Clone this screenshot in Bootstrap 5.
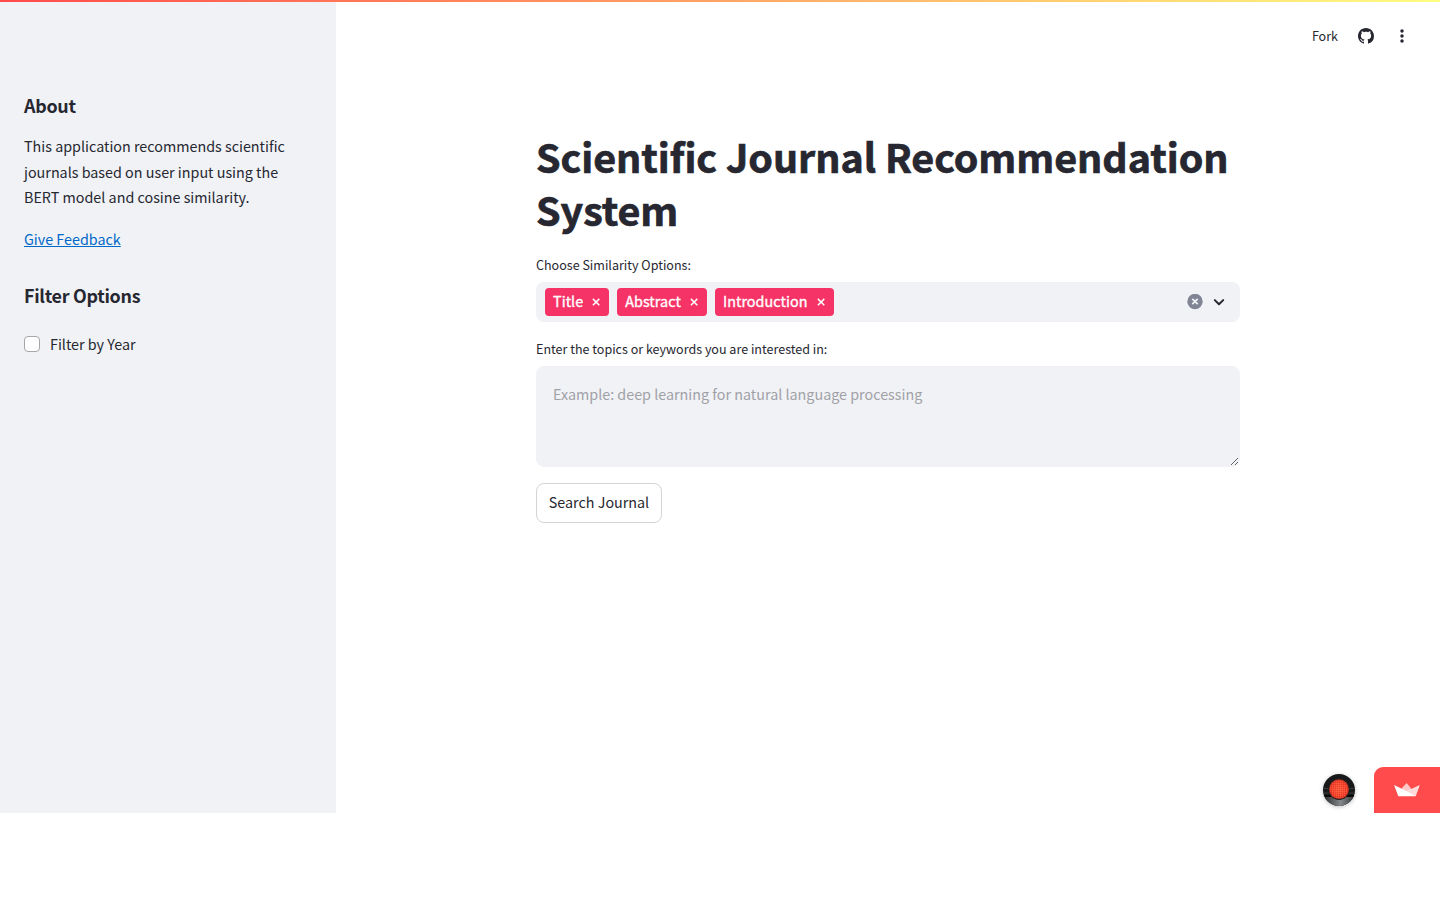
<!DOCTYPE html>
<html lang="en">
<head>
<meta charset="utf-8">
<meta name="viewport" content="width=device-width, initial-scale=1">
<title>Scientific Journal Recommendation System</title>
<link href="https://cdn.jsdelivr.net/npm/bootstrap@5.3.0/dist/css/bootstrap.min.css" rel="stylesheet">
<style>
  body { font-family: "Source Sans Pro", "Noto Sans CJK SC", sans-serif; font-size: 14.33px; line-height: 25.6px; color: #262730; background: #fff; }
  .app-shell { height: 813px; }
  .rainbow { top: 0; left: 0; height: 2px; background: linear-gradient(90deg, #ff4b4b, #fffd80); }
  .side-pane { width: 336px; background: #f0f2f6; padding: 93px 24px 0; }
  .side-pane h2 { font-size: 17.9px; line-height: 24px; font-weight: 700; letter-spacing: -.29px; margin: 0; }
  .side-pane p { margin: 16px 0 0; }
  .side-pane a { color: #0068c9; }
  .side-pane h2.filter-title { margin-top: 32px; }
  .filter-check { margin-top: 24px; gap: 10px; }
  .filter-check .form-check-input { width: 16px; height: 16px; margin: 0; border: 1px solid #a5a6ab; border-radius: 4px; }
  .topbar { height: 72px; padding-right: 30px; gap: 20px; font-size: 12.54px; line-height: 20px; }
  .content { width: 704px; margin: 58px 0 0 200px; }
  h1 { font-size: 39.4px; line-height: 52.8px; font-weight: 700; letter-spacing: -.03px; -webkit-text-stroke: .7px #262730; margin: 0 0 19px; white-space: nowrap; }
  .field-label { font-size: 12.54px; line-height: 20px; margin-bottom: 7px; }
  .multi { height: 40px; background: #f0f2f6; border-radius: 8px; padding: 0 13px 0 9px; margin-bottom: 17px; }
  .chip { height: 28px; background: #f63366; color: #fff; border-radius: 4px; padding: 0 8px; gap: 8px; font-weight: 400; -webkit-text-stroke: .35px #fff; }
  .chip span { position: relative; top: -1px; letter-spacing: .06px; }
  .topics { height: 101px; padding: 14px 16px; font-size: 14.33px; line-height: 25.6px; background: #f0f2f6; border: 1px solid #f0f2f6; border-radius: 8px; resize: vertical; margin-bottom: 16px; }
  .topics::placeholder { color: #a0a1a6; }
  .search-btn { width: 126px; height: 40px; border: 1px solid #d3d4d7; border-radius: 8px; padding: 0 0 2px; font-size: 14.33px; color: #262730; }
  .avatar-link { right: 85px; bottom: 7px; width: 32px; height: 32px; border-radius: 50%; box-shadow: 0 1px 4px rgba(0,0,0,.25); }
  .host-link { right: 0; bottom: 0; width: 66px; height: 46px; background: #ff4b4b; border-radius: 9px 0 0 0; }
</style>
</head>
<body>
<div class="app-shell d-flex position-relative">
  <aside class="side-pane flex-shrink-0">
    <h2>About</h2>
    <p>This application recommends scientific<br>journals based on user input using the<br>BERT model and cosine similarity.</p>
    <p><a href="#">Give Feedback</a></p>
    <h2 class="filter-title">Filter Options</h2>
    <label class="filter-check d-flex align-items-center"><input class="form-check-input" type="checkbox"><span>Filter by Year</span></label>
  </aside>
  <main class="flex-grow-1">
    <header class="topbar d-flex justify-content-end align-items-center">
      <span>Fork</span>
      <svg width="16" height="16" viewBox="0 0 16 16" fill="#262730"><path d="M8 0C3.58 0 0 3.58 0 8c0 3.54 2.29 6.53 5.47 7.59.4.07.55-.17.55-.38 0-.19-.01-.82-.01-1.49-2.01.37-2.53-.49-2.69-.94-.09-.23-.48-.94-.82-1.13-.28-.15-.68-.52-.01-.53.63-.01 1.08.58 1.23.82.72 1.21 1.87.87 2.33.66.07-.52.28-.87.51-1.07-1.78-.2-3.64-.89-3.64-3.95 0-.87.31-1.59.82-2.15-.08-.2-.36-1.02.08-2.12 0 0 .67-.21 2.2.82.64-.18 1.32-.27 2-.27s1.36.09 2 .27c1.53-1.04 2.2-.82 2.2-.82.44 1.1.16 1.92.08 2.12.51.56.82 1.27.82 2.15 0 3.07-1.87 3.75-3.65 3.95.29.25.54.73.54 1.48 0 1.07-.01 1.93-.01 2.2 0 .21.15.46.55.38A8.01 8.01 0 0 0 16 8c0-4.42-3.58-8-8-8z"/></svg>
      <svg width="16" height="16" viewBox="0 0 16 16" fill="#262730"><circle cx="8" cy="3" r="1.75"/><circle cx="8" cy="8" r="1.75"/><circle cx="8" cy="13" r="1.75"/></svg>
    </header>
    <section class="content">
      <h1>Scientific Journal Recommendation<br>System</h1>
      <div class="field-label">Choose Similarity Options:</div>
      <div class="multi d-flex align-items-center">
        <div class="d-flex gap-2 flex-grow-1">
          <div class="chip d-flex align-items-center"><span>Title</span><svg width="10" height="10" viewBox="0 0 10 10" stroke="#fff" stroke-width="1.5"><path d="M1.9 1.9l6.4 6.4M8.3 1.9L1.9 8.3"/></svg></div>
          <div class="chip d-flex align-items-center"><span>Abstract</span><svg width="10" height="10" viewBox="0 0 10 10" stroke="#fff" stroke-width="1.5"><path d="M1.9 1.9l6.4 6.4M8.3 1.9L1.9 8.3"/></svg></div>
          <div class="chip d-flex align-items-center"><span>Introduction</span><svg width="10" height="10" viewBox="0 0 10 10" stroke="#fff" stroke-width="1.5"><path d="M1.9 1.9l6.4 6.4M8.3 1.9L1.9 8.3"/></svg></div>
        </div>
        <svg width="16" height="16" viewBox="0 0 16 16"><circle cx="8" cy="7.5" r="7.7" fill="#808495"/><path d="M5.3 4.8l5.4 5.4M10.7 4.8l-5.4 5.4" stroke="#f0f2f6" stroke-width="1.7"/></svg>
        <svg class="ms-2" width="16" height="16" viewBox="0 0 16 16" fill="none"><path d="M3.8 6.1L8 10.2l4.2-4.1" stroke="#262730" stroke-width="2" stroke-linecap="round" stroke-linejoin="round"/></svg>
      </div>
      <div class="field-label">Enter the topics or keywords you are interested in:</div>
      <textarea class="topics form-control shadow-none" placeholder="Example: deep learning for natural language processing"></textarea>
      <button class="search-btn btn d-flex align-items-center justify-content-center" type="button">Search Journal</button>
    </section>
  </main>
  <div class="rainbow position-absolute w-100"></div>
  <a class="avatar-link position-absolute d-block" href="#" aria-label="Profile">
    <svg class="d-block" width="32" height="32" viewBox="0 0 32 32">
      <defs>
        <clipPath id="disc"><circle cx="16" cy="16" r="16"/></clipPath>
        <linearGradient id="metal" x1="0" y1="0" x2="1" y2="0"><stop offset="0" stop-color="#242627"/><stop offset=".55" stop-color="#85888a"/><stop offset="1" stop-color="#303234"/></linearGradient>
        <radialGradient id="glow"><stop offset="0" stop-color="#ff5a3c"/><stop offset=".75" stop-color="#f6402c"/><stop offset="1" stop-color="#c92f20"/></radialGradient>
        <pattern id="mesh" width="2" height="2" patternUnits="userSpaceOnUse"><rect width="1" height="1" fill="#b9301d" opacity=".3"/><rect x="1" y="1" width="1" height="1" fill="#ff8a5c" opacity=".35"/></pattern>
      </defs>
      <g clip-path="url(#disc)">
        <rect width="32" height="32" fill="#18191a"/>
        <path d="M0 23h32v9H0z" fill="url(#metal)"/>
        <path d="M0 14.5h32M0 19h32" stroke="#3b3d3e"/>
        <path d="M0 21h32v2H0z" fill="#080909"/>
        <circle cx="16" cy="15.2" r="10.8" fill="#1d1e1f"/>
        <circle cx="16" cy="15.2" r="9.9" fill="url(#glow)"/>
        <circle cx="16" cy="15.2" r="9.3" fill="url(#mesh)"/>
      </g>
    </svg>
  </a>
  <a class="host-link position-absolute d-flex align-items-center justify-content-center" href="#" aria-label="Hosted app">
    <svg width="26" height="16" viewBox="0 0 26 16"><path d="M7.8 6.2L12.7 1l5 6.2-4.5 6.5z" fill="#ffc9c9"/><path d="M0 3l13 6.2 12.6-6-3.8 10.2c-.2.6-.6.9-1.2.9H5.2c-.6 0-1-.3-1.2-.9z" fill="#fff"/><path d="M25.6 3.2L13 9.2l8.2 5c.3-.1.5-.4.6-.8z" fill="#ffdada"/></svg>
  </a>
</div>
<script src="https://cdn.jsdelivr.net/npm/bootstrap@5.3.0/dist/js/bootstrap.bundle.min.js"></script>
</body>
</html>
